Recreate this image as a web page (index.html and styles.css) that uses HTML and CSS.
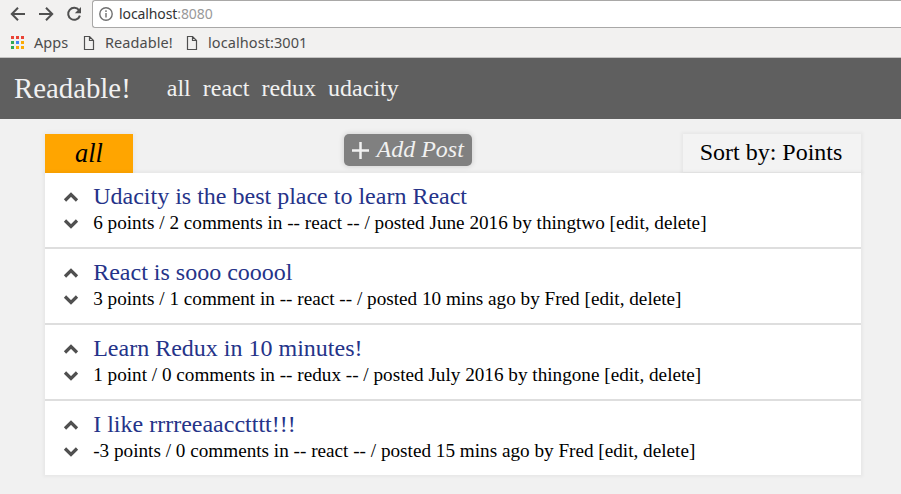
FILE: index.html
```
<!DOCTYPE html>
<html lang="en">
<head>
<meta charset="utf-8">
<title>Readable!</title>
<link rel="stylesheet" href="styles.css">
</head>
<body>
<svg width="0" height="0" class="defs">
  <symbol id="up" viewBox="0 0 16 10"><path d="M2 8.500 8 2.500l6 6" fill="none" stroke="#505050" stroke-width="3.200"/></symbol>
  <symbol id="down" viewBox="0 0 16 10"><path d="M2 1.500 8 7.500l6-6" fill="none" stroke="#505050" stroke-width="3.200"/></symbol>
  <symbol id="page" viewBox="0 0 12 14"><path d="M1.500.5h5l4 4v9h-9zM6.500.5v4h4" fill="none" stroke="#505050" stroke-width="1.200"/></symbol>
</svg>
<div class="browser">
  <div class="toolbar">
    <svg class="tool" viewBox="0 0 16 16"><path d="M15 8H2.500M8 1.800 1.800 8 8 14.200"/></svg>
    <svg class="tool" viewBox="0 0 16 16"><path d="M1 8h12.500M8 1.800 14.200 8 8 14.200"/></svg>
    <svg class="tool" viewBox="0 0 16 16"><path d="M13 4.200A6 6 0 1 0 13.900 9.600"/><path class="solid" d="M15 1v6.200H8.800z"/></svg>
    <div class="address">
      <svg class="info" viewBox="0 0 14 14"><circle cx="7" cy="7" r="6.200"/><path d="M7 6v4.500M7 3.300V5"/></svg>
      <span class="url">localhost<span class="port">:8080</span></span>
    </div>
  </div>
  <div class="bookmarks">
    <svg class="apps" viewBox="0 0 13 13"><path fill="#ea4335" d="M0 0h3v3H0zM5 0h3v3H5zM10 0h3v3h-3z"/><path fill="#34a853" d="M0 5h3v3H0zM0 10h3v3H0z"/><path fill="#4285f4" d="M5 5h3v3H5z"/><path fill="#fbab05" d="M10 5h3v3h-3zM5 10h3v3H5zM10 10h3v3h-3z"/></svg>
    <span class="bm bm-apps">Apps</span>
    <svg class="page"><use href="#page"/></svg>
    <span class="bm bm-readable">Readable!</span>
    <svg class="page"><use href="#page"/></svg>
    <span class="bm bm-local">localhost:3001</span>
  </div>
</div>
<header class="header">
  <h1 class="brand">Readable!</h1>
  <nav class="nav"><a>all</a><a>react</a><a>redux</a><a>udacity</a></nav>
</header>
<main class="content">
  <div class="controls">
    <div class="category">all</div>
    <div class="add"><svg class="plus" viewBox="0 0 17 17"><path d="M8.500 0v17M0 8.500h17"/></svg><span>Add Post</span></div>
    <div class="sort">Sort by: Points</div>
  </div>
  <div class="posts">
    <article class="post">
      <div class="votes"><svg><use href="#up"/></svg><svg><use href="#down"/></svg></div>
      <div class="text"><h2>Udacity is the best place to learn React</h2><p>6 points / 2 comments in -- react -- / posted June 2016 by thingtwo [edit, delete]</p></div>
    </article>
    <article class="post">
      <div class="votes"><svg><use href="#up"/></svg><svg><use href="#down"/></svg></div>
      <div class="text"><h2>React is sooo cooool</h2><p>3 points / 1 comment in -- react -- / posted 10 mins ago by Fred [edit, delete]</p></div>
    </article>
    <article class="post">
      <div class="votes"><svg><use href="#up"/></svg><svg><use href="#down"/></svg></div>
      <div class="text"><h2>Learn Redux in 10 minutes!</h2><p>1 point / 0 comments in -- redux -- / posted July 2016 by thingone [edit, delete]</p></div>
    </article>
    <article class="post">
      <div class="votes"><svg><use href="#up"/></svg><svg><use href="#down"/></svg></div>
      <div class="text"><h2>I like rrrreeaacctttt!!!</h2><p>-3 points / 0 comments in -- react -- / posted 15 mins ago by Fred [edit, delete]</p></div>
    </article>
  </div>
</main>
</body>
</html>
```
FILE: styles.css
```
* { box-sizing: border-box; }
body { margin: 0; height: 494px; overflow: hidden; background: #f1f1f1; font-family: "Liberation Serif", serif; color: #000; }
h1, h2, p { margin: 0; font-weight: normal; }
svg { display: block; flex: none; }
.defs { display: none; }

.browser { height: 58px; background: #f2f1f0; border-bottom: 1px solid #c4c3c2; font-family: "Noto Sans", "Open Sans", sans-serif; color: #4c4c4c; }
.toolbar { display: flex; height: 28px; padding-left: 10px; }
.tool { width: 16px; height: 16px; margin: 6px 12px 0 0; fill: none; stroke: #505050; stroke-width: 2; }
.tool .solid { fill: #505050; stroke: none; }
.address { display: flex; align-items: center; flex: 1; height: 28px; margin-left: -2px; padding-left: 6px; background: #fff; border: 1px solid #a9a8a7; border-right: 0; border-radius: 3px 0 0 3px; }
.info { width: 14px; height: 14px; fill: none; stroke: #707070; stroke-width: 1.400; }
.url { margin-left: 6px; font-size: 14px; line-height: 20px; letter-spacing: -.1px; color: #333; }
.port { color: #999; }
.bookmarks { display: flex; align-items: center; height: 29px; padding-left: 11px; font-size: 14.500px; line-height: 20px; }
.bm { padding-bottom: 2px; letter-spacing: .08px; }
.apps { width: 13px; height: 13px; }
.bm-apps { width: 49px; margin-left: 10px; }
.page { width: 12px; height: 14px; }
.bm-readable { width: 81px; margin-left: 10px; }
.bm-local { margin-left: 10px; }

.header { display: flex; align-items: center; height: 61px; padding: 0 0 2px 14px; background: #5f5f5f; color: #f1f1f1; }
.brand { width: 152.800px; font-size: 28.800px; line-height: 34px; }
.nav { display: flex; gap: 12px; font-size: 24px; line-height: 28px; }

.content { width: 816px; margin: 15px 0 0 45px; }
.controls { display: flex; justify-content: space-between; align-items: flex-start; height: 39px; }
.category { width: 88px; height: 39px; background: orange; font-size: 26.400px; font-style: italic; line-height: 38px; text-align: center; box-shadow: 0 0 5px 1px rgba(0, 0, 0, .05); }
.add { display: flex; align-items: center; width: 128px; height: 32px; padding-left: 7.500px; border-radius: 5px; background: #808080; color: #f1f1f1; font-size: 24px; font-style: italic; line-height: 30px; box-shadow: 0 0 5px 1px rgba(0, 0, 0, .12); }
.add span { padding-bottom: 2px; }
.plus { width: 17px; height: 17px; margin-right: 8px; fill: none; stroke: #f1f1f1; stroke-width: 2.500; }
.sort { width: 178px; height: 38px; padding-right: 2px; background: #f3f3f3; font-size: 24px; line-height: 37px; text-align: center; box-shadow: 0 0 3px 2px rgba(0, 0, 0, .04); }
.posts { position: relative; background: #fff; box-shadow: 0 0 3px 2px rgba(0, 0, 0, .04); }
.post { display: flex; height: 76px; border-bottom: 2px solid #dedede; }
.post:last-child { height: 74px; border-bottom: 0; }
.votes { width: 48.200px; padding: 19px 0 0 18px; }
.votes svg { width: 16px; height: 10px; margin-bottom: 17px; }
.text h2 { padding-top: 9px; font-size: 24px; line-height: 28px; color: #253389; }
.text p { font-size: 19.210px; line-height: 25px; }
```
